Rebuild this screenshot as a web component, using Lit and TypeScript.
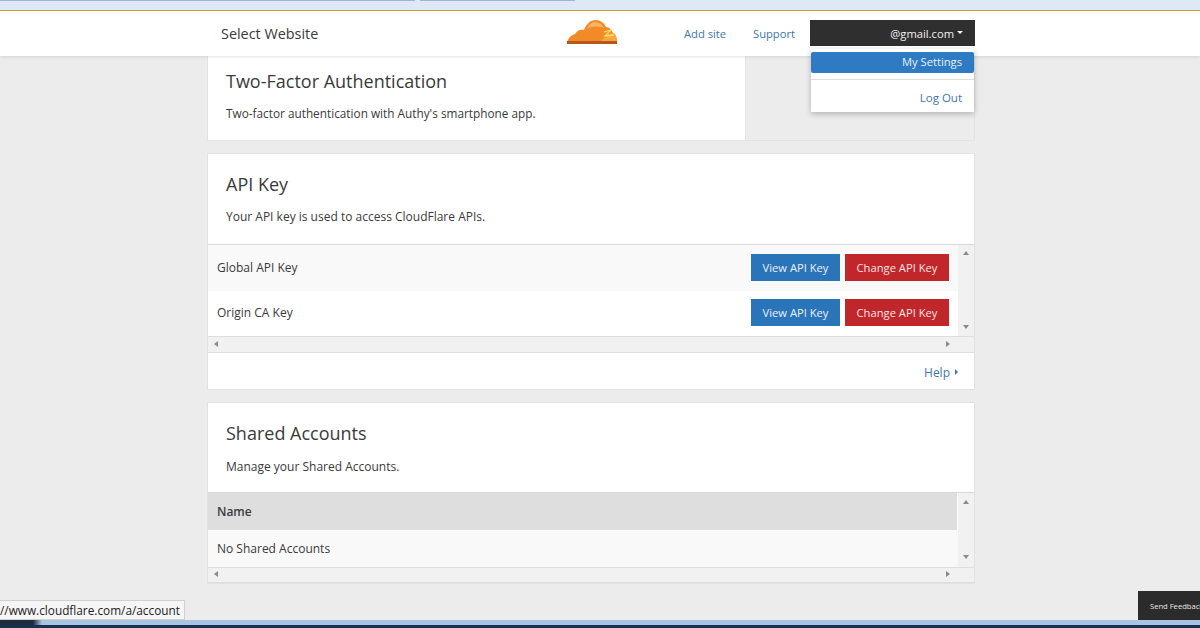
import { LitElement, html, css, svg } from "lit";
import { customElement } from "lit/decorators.js";

const arrow = (d: string) => html`<svg class="arr" width="8" height="8" viewBox="0 0 8 8"><path d="${d}" fill="#8a8a8a"></path></svg>`;
const UP = "M4 2 L7 6 H1 Z";
const DOWN = "M1 2 H7 L4 6 Z";
const LEFT = "M2 4 L6 1 V7 Z";
const RIGHT = "M6 4 L2 1 V7 Z";

@customElement("app-root")
export class AppRoot extends LitElement {
  static styles = css`
    :host { display: block; }
    * { box-sizing: border-box; }
    .page { position: relative; width: 1200px; height: 628px; overflow: hidden; background: #ececec; font-family: "Open Sans", "Noto Sans", sans-serif; color: #3a3a3a; font-size: 12px; }
    .chrome { height: 11px; background: #dde9f4; border-bottom: 1px solid #d39f3a; display: flex; align-items: flex-start; gap: 5px; }
    .tab { height: 1px; background: #a9b0dc; }
    .tab.a { width: 415px; }
    .tab.b { width: 155px; }
    header { height: 45px; background: #fff; box-shadow: 0 1px 3px rgba(0,0,0,.1); position: relative; z-index: 2; }
    .bar { width: 768px; margin-left: 207px; height: 45px; display: flex; align-items: center; }
    .brand { width: 360px; padding-left: 14px; font-size: 14.4px; color: #3a3a3a; }
    .logo { width: 117px; display: flex; margin-top: -3px; }
    .nav { color: #3f77a8; font-size: 11.2px; width: 69px; }
    .nav.sup { width: 57px; }
    .user { width: 165px; height: 26px; background: #2f2f2f; color: #f2f2f2; font-size: 11.2px; display: flex; align-items: center; justify-content: flex-end; gap: 3px; padding-right: 12px; margin-top: -1px; }
    .caret { width: 0; height: 0; border-left: 3.5px solid transparent; border-right: 3.5px solid transparent; border-top: 3.5px solid #f2f2f2; margin-top: -2px; }
    .menu { position: absolute; left: 811px; top: 49px; width: 163px; height: 63px; background: #fff; box-shadow: 0 2px 6px rgba(0,0,0,.25); z-index: 3; font-size: 11.2px; text-align: right; padding-top: 3px; }
    .menu .sel { height: 21px; line-height: 20px; background: #2f7bc3; color: #e8f0f8; padding-right: 12px; border-radius: 2px; margin: 0 0 6px 0; }
    .menu hr { border: 0; border-top: 1px solid #ddd; margin: 0 0 10px 0; }
    .menu .out { color: #3f77a8; padding-right: 12px; font-size: 11.5px; }
    main { width: 768px; margin-left: 207px; display: flex; flex-direction: column; gap: 12px; }
    .card { background: #fff; border: 1px solid #e2e2e2; }
    .top { height: 85px; display: flex; background: transparent; border-top: 0; }
    .top .left { width: 538px; background: #fff; border-right: 1px solid #e2e2e2; padding: 13px 18px; }
    .top p { font-size: 11.8px; margin-top: 12px; }
    h2 { margin: 0; font-weight: 400; font-size: 18px; line-height: 24px; color: #3a3a3a; }
    p { margin: 13px 0 0; font-size: 12px; line-height: 16px; color: #3a3a3a; }
    .head { padding: 18px 18px 0; height: 90px; }
    .scroller { display: grid; grid-template-columns: 750px 16px; grid-template-rows: auto 17px; border-top: 1px solid #d8d8d8; background: #f1f1f1; }
    .rows { background: #fff; }
    .row { display: flex; align-items: center; justify-content: space-between; padding: 0 9px; font-size: 12px; color: #3a3a3a; }
    .key { height: 46px; padding-bottom: 2px; }
    .key:last-child { height: 45px; }
    .shade { background: #f9f9f9; }
    .btns { display: flex; gap: 5px; }
    .btn { height: 27px; line-height: 27px; text-align: center; font-size: 11.2px; color: #ecf2f8; }
    .view { width: 89px; background: #2a74b9; }
    .chg { width: 104px; background: #c1262b; color: #f6e4e4; }
    .v { grid-column: 2; grid-row: 1; display: flex; flex-direction: column; justify-content: space-between; align-items: center; padding: 4px 0 5px; }
    .h { grid-column: 1 / 3; grid-row: 2; display: flex; justify-content: space-between; align-items: center; padding: 0 22px 1px 4px; border-top: 1px solid #dedede; border-bottom: 1px solid #dedede; }
    .arr { display: block; }
    .help { height: 36px; display: flex; align-items: center; justify-content: flex-end; gap: 5px; padding: 2px 16px 0 0; color: #3f77a8; font-size: 12px; }
    .tri { width: 0; height: 0; border-top: 3px solid transparent; border-bottom: 3px solid transparent; border-left: 3px solid #3f77a8; }
    .shared .head { height: 89px; padding-top: 18px; }
    .shared p { margin-top: 14px; }
    .shared .scroller { grid-template-rows: auto 16px; }
    .shared .v { padding: 5px 0 6px; }
    .shared .h { padding-bottom: 2px; }
    .th { height: 37px; background: #dedede; font-weight: 600; width: 749px; }
    .empty { height: 37px; }
    .status { position: absolute; left: 0; top: 600px; width: 185px; height: 20px; background: #f6f6f6; border: 1px solid #d0d0d0; border-left: 0; font-size: 11.8px; line-height: 18px; color: #222; white-space: nowrap; }
    .feedback { position: absolute; left: 1138px; top: 591px; width: 62px; height: 29px; background: #2b2b2b; color: #e8e8e8; font-size: 7.6px; line-height: 31px; padding-left: 12px; white-space: nowrap; overflow: hidden; z-index: 2; }
    .task { position: absolute; left: 0; top: 620px; width: 1200px; height: 8px; background: linear-gradient(transparent 0 5px, #16324e 5px), linear-gradient(90deg, #1d2c3c 0 33px, #a8c4e2 42px); }
  `;

  render() {
    return html`<div class="page">
      <div class="chrome"><div class="tab a"></div><div class="tab b"></div></div>
      <header><div class="bar">
        <div class="brand">Select Website</div>
        <div class="logo"><svg width="50" height="24" viewBox="0 0 50 24">
          ${svg`<path d="M0 23 C1 18 4 15 8 14 C10 10 14 9 17 10 C19 4 24 0 28 0 C34 0 37 3 39 7 C42 7 45 10 46 13 C49 14 50 18 50 23 Z" fill="#f28a28"></path>
          <path d="M20 9 C22 4 25 2 28 2 C32 2 35 4 37 8 C31 6 25 6 20 9 Z" fill="#f9b566"></path>
          <path d="M34 22 C36 18 40 14 46 13 C49 14 50 18 50 22 Z" fill="#f9a83f"></path>
          <path d="M37 12 L44 10 L38 16 L47 15" fill="none" stroke="#fbe06a" stroke-width="1.3"></path>
          <rect x="0" y="21" width="50" height="3" fill="#b4561f"></rect>`}
        </svg></div>
        <div class="nav">Add site</div>
        <div class="nav sup">Support</div>
        <div class="user">@gmail.com <span class="caret"></span></div>
      </div></header>
      <div class="menu">
        <div class="sel">My Settings</div>
        <hr />
        <div class="out">Log Out</div>
      </div>
      <main>
        <section class="card top"><div class="left">
          <h2>Two-Factor Authentication</h2>
          <p>Two-factor authentication with Authy's smartphone app.</p>
        </div></section>
        <section class="card">
          <div class="head"><h2>API Key</h2><p>Your API key is used to access CloudFlare APIs.</p></div>
          <div class="scroller">
            <div class="rows">
              <div class="row key shade"><span>Global API Key</span><div class="btns"><div class="btn view">View API Key</div><div class="btn chg">Change API Key</div></div></div>
              <div class="row key"><span>Origin CA Key</span><div class="btns"><div class="btn view">View API Key</div><div class="btn chg">Change API Key</div></div></div>
            </div>
            <div class="v">${arrow(UP)}${arrow(DOWN)}</div>
            <div class="h">${arrow(LEFT)}${arrow(RIGHT)}</div>
          </div>
          <div class="help">Help <span class="tri"></span></div>
        </section>
        <section class="card shared">
          <div class="head"><h2>Shared Accounts</h2><p>Manage your Shared Accounts.</p></div>
          <div class="scroller">
            <div class="rows">
              <div class="row th">Name</div>
              <div class="row empty shade">No Shared Accounts</div>
            </div>
            <div class="v">${arrow(UP)}${arrow(DOWN)}</div>
            <div class="h">${arrow(LEFT)}${arrow(RIGHT)}</div>
          </div>
        </section>
      </main>
      <div class="status">//www.cloudflare.com/a/account</div>
      <div class="feedback">Send Feedback</div>
      <div class="task"></div>
    </div>`;
  }
}
